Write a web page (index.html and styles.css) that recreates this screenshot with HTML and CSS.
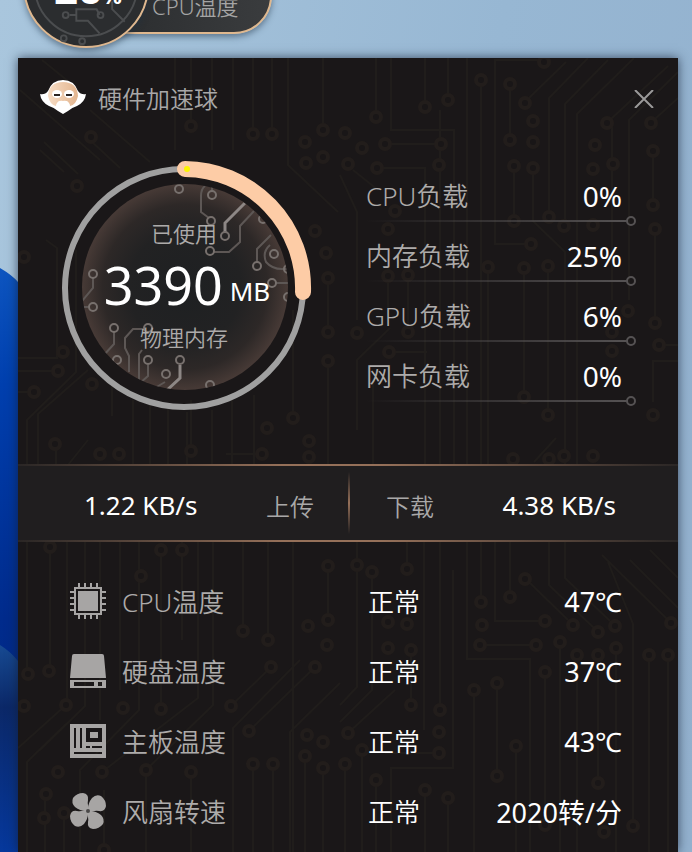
FILE: index.html
```html
<!DOCTYPE html>
<html lang="zh-CN">
<head>
    <meta charset="UTF-8">
    <meta name="viewport" content="width=device-width, initial-scale=1.0">
    <title>硬件加速球</title>
    <link rel="stylesheet" href="styles.css">
</head>
<body>

<!-- wallpaper -->
<svg class="wallpaper" width="60" height="852" viewBox="0 0 60 852" aria-hidden="true">
    <defs>
        <linearGradient id="petal" x1="0" y1="0" x2="0" y2="1">
            <stop offset="0" stop-color="#0d55c0"/>
            <stop offset="0.2" stop-color="#003fae"/>
            <stop offset="0.6" stop-color="#002b8c"/>
            <stop offset="1" stop-color="#00267c"/>
        </linearGradient>
        <linearGradient id="petal2" x1="0" y1="0" x2="0" y2="1">
            <stop offset="0" stop-color="#174a92"/>
            <stop offset="0.3" stop-color="#0b2868"/>
            <stop offset="1" stop-color="#06389c"/>
        </linearGradient>
    </defs>
    <path d="M0 268Q12 275 18 282L60 320V852H0Z" fill="url(#petal)"/>
    <path d="M0 645Q10 651 18 661L60 700V852H0Z" fill="url(#petal2)"/>
</svg>

<!-- floating ball -->
<div class="ball">
    <div class="ball-pill">CPU温度</div>
    <div class="ball-circle">
        <svg viewBox="0 0 126 126" width="122" height="122" aria-hidden="true">
            <g fill="none" stroke="#4b4d4f" stroke-width="2">
                <circle cx="63" cy="63" r="53"/>
                <path d="M46 94H53V88H74L77 94M53 94V100H65L77 113M90 80V88L103 101"/>
                <circle cx="42" cy="94" r="3"/>
                <circle cx="78" cy="94" r="3"/>
                <circle cx="40" cy="118" r="3"/>
                <circle cx="59" cy="121" r="3"/>
            </g>
        </svg>
        <span class="ball-num">26<small>%</small></span>
    </div>
</div>

<main class="panel">

    <svg class="circuit" viewBox="18 58 660 794" preserveAspectRatio="xMinYMin slice" aria-hidden="true">
        <path class="trace" d="M323 58V124M376 58V112M391 58V130H454V465M425 58V101M448 58V94M467 58V465M481 86V465M495 230V60H540M510 84V140M566 62L529 98M588 58L549 98V210M608 60L565 104V220M634 58L577 114V465M668 66L611 119M655 119L678 98M678 72L629 120V300M653 157V200M385 144H441"/>
        <path class="trace" d="M42 60L74 86M20 90L100 160M90 110L150 162M175 58V150M191 58V120M212 58V150M233 58V150M253 58V130M272 58V130M288 58V165L338 212M40 150L64 172M44 142L78 174M90 140L120 168M46 240L57 248V358H18M76 250V372L27 420V465M18 371H53M18 392H28M38 465V414L88 370M56 449V465M112 416V380M133 400V465M150 405V465M168 408V465M187 412V465M212 410V465M232 400V465M254 395V465M293 310V412M328 284V327M328 367V465"/>
        <path class="trace" d="M353 170L378 190M377 168H425V465M514 166V216M533 168V221L565 252V465M495 230V244H526M655 229V317M488 267V465M524 268V392M548 266V410M408 275V327M389 352H427M357 430V360L390 328M659 345H678M653 402V361H678M340 175L357 212V320M388 282V320M440 110V465M612 120V300M68 465L88 440M226 454H257M534 462L556 438M191 400V445M373 380V465"/>
        <path class="trace" d="M50 547V671M27 540V674M67 540V700M85 540V706L40 750M100 540V720M120 540V690M139 540V710L80 770V852M161 550V704M182 540V640M198 540V698L102 772M213 540V705L146 770M243 540V626M268 540V635M293 540V852M328 566V615M271 667L231 706M315 667L249 731M340 683L290 732V852M233 852V728L300 660M66 705L18 748M146 770V852M191 772V852M253 764V852M273 764V852M305 756V852M323 768V852M45 800V852M64 813V852M27 852V762L66 724M104 790V852"/>
        <path class="trace" d="M407 540V565M411 650V700M424 540V730M440 540V705M453 570V768H391V852M467 540V659H530V852M481 540V597M495 540V621H540M510 540V591M530 583L568 620M549 540V585L594 628M610 621L565 578V540M608 562L633 624V821M602 555L668 620M630 560L678 608M650 550L678 578M481 645H536M560 642V852M577 655V852M598 655V778M616 648V852M649 655V852M668 655V852M474 690V852M497 683V770M545 672V820M516 746V852M362 750V852M345 764V852M376 780V852M385 753H439M425 790V852M448 798V852M340 705L357 687V540M340 722L372 690V578M348 733L395 690"/>
        <defs>
            <path id="pads-top" d="M323 130h0M376 117h0M425 107h0M448 100h0M481 80h0M544 62h0M510 84h0M510 140h0M525 103h0M607 123h0M651 123h0M533 121h0M533 142h0M595 145h0M653 151h0M613 164h0M385 144h0M441 144h0M345 133h0M305 142h0M362 148h0M323 157h0M306 163h0M348 164h0M191 126h0M253 134h0M272 134h0M91 137h0M77 186h0M315 231h0M326 253h0M328 278h0M328 332h0M328 361h0M63 352h0M58 371h0M92 384h0M293 418h0M267 428h0"/>
            <path id="pads-mid" d="M24 257h0M34 392h0M377 168h0M439 165h0M514 166h0M533 168h0M593 169h0M395 211h0M388 229h0M549 217h0M564 226h0M593 225h0M531 244h0M514 221h0M653 205h0M655 229h0M655 323h0M488 267h0M524 268h0M548 266h0M524 397h0M388 276h0M408 275h0M408 332h0M357 333h0M389 352h0M628 311h0M612 332h0M612 351h0M659 345h0M548 415h0M653 415h0M55 444h0M100 454h0M119 454h0M191 451h0M262 454h0M309 441h0M309 457h0M513 459h0M549 459h0M564 456h0M593 456h0"/>
            <path id="pads-left" d="M50 547h0M28 674h0M161 550h0M182 550h0M49 671h0M24 706h0M141 576h0M161 709h0M123 708h0M243 631h0M268 640h0M308 626h0M328 566h0M328 620h0M327 645h0M271 667h0M231 706h0M315 667h0M249 731h0M66 705h0M58 772h0M102 772h0M146 770h0M191 772h0M253 764h0M273 764h0M305 756h0M323 768h0M307 735h0M323 742h0M46 794h0M64 813h0M44 818h0M104 850h0"/>
            <path id="pads-right" d="M357 565h0M372 572h0M407 569h0M388 622h0M407 624h0M388 648h0M411 650h0M411 705h0M440 710h0M481 602h0M545 621h0M482 625h0M510 597h0M525 579h0M573 625h0M598 632h0M615 626h0M671 623h0M480 645h0M536 645h0M560 642h0M577 655h0M598 655h0M598 783h0M616 648h0M649 655h0M668 655h0M474 690h0M497 683h0M497 776h0M545 672h0M545 825h0M516 746h0M348 733h0M362 750h0M345 764h0M376 780h0M439 732h0M439 753h0M425 790h0M448 798h0M633 826h0M604 832h0"/>
        </defs>
        <g class="pads">
            <use href="#pads-top"/><use href="#pads-mid"/><use href="#pads-left"/><use href="#pads-right"/>
        </g>
        <g class="holes">
            <use href="#pads-top"/><use href="#pads-mid"/><use href="#pads-left"/><use href="#pads-right"/>
        </g>
    </svg>

    <header class="head">
        <svg class="logo" width="46" height="34" viewBox="0 0 46 34" aria-hidden="true">
            <defs>
                <linearGradient id="skin" x1="0" x2="1">
                    <stop offset="0" stop-color="#f7ddc5"/>
                    <stop offset="1" stop-color="#e2b48e"/>
                </linearGradient>
            </defs>
            <path d="M0 14Q5 15 8 11Q12 0 23 0Q34 0 38 11Q41 15 46 14Q45 22 37 26Q31 28 28 31L23 34L18 31Q15 28 9 26Q1 22 0 14Z" fill="#fff"/>
            <path d="M8 16Q9 2 23 2Q37 2 38 16Q36 25 30 26L27 21H19L16 26Q10 25 8 16Z" fill="url(#skin)"/>
            <ellipse cx="17" cy="14" rx="5" ry="4" fill="#fff"/>
            <ellipse cx="29" cy="14" rx="5" ry="4" fill="#fff"/>
            <path d="M14 15H20M26 15H32" stroke="#2b2422" stroke-width="2"/>
            <path d="M23 21Q28 20 30 25Q28 31 23 33Q18 31 16 25Q18 20 23 21Z" fill="#fff"/>
        </svg>
        <h1>硬件加速球</h1>
        <button class="close" type="button" aria-label="关闭">
            <svg width="20" height="18" viewBox="0 0 20 18"><path d="M1 0L19 18M19 0L1 18" stroke="#9b9a9a" stroke-width="2" fill="none"/></svg>
        </button>
    </header>

    <section class="overview">
        <div class="gauge">
            <svg width="252" height="252" viewBox="0 0 252 252" aria-hidden="true">
                <defs>
                    <radialGradient id="disc">
                        <stop offset="0" stop-color="#1e2022"/>
                        <stop offset="0.55" stop-color="#222223"/>
                        <stop offset="0.8" stop-color="#2d2827"/>
                        <stop offset="1" stop-color="#473a36"/>
                    </radialGradient>
                    <clipPath id="disc-clip"><circle cx="127" cy="125" r="103"/></clipPath>
                </defs>
                <circle cx="127" cy="125" r="103" fill="url(#disc)"/>
                <g clip-path="url(#disc-clip)" fill="none" stroke="#5d5755" stroke-width="2">
                    <path d="M147 24Q143 27 143 34V50L151 56M154 21V30"/>
                    <path d="M167 71V61L187 41" stroke="#8d8785" stroke-width="3"/>
                    <path d="M156 90H171L182 80V64L196 49M199 100V87L213 73M212 83Q204 90 208 100Q214 107 224 107H229M218 121H230M35 116V126L24 139M26 145H31M56 170V182L45 194"/>
                    <path d="M71 210V194L67 186V176L75 167H86M81 220V192L84 188M90 203V214L82 221M107 220L97 226"/>
                    <path d="M122 203V216L108 229" stroke="#8d8785" stroke-width="3"/>
                    <g stroke="#77706d">
                        <circle cx="121" cy="27" r="4"/><circle cx="154" cy="33" r="4"/>
                        <circle cx="153" cy="59" r="4"/><circle cx="167" cy="74" r="4"/>
                        <circle cx="152" cy="89" r="4"/><circle cx="199" cy="104" r="4"/>
                        <circle cx="216" cy="92" r="4"/><circle cx="205" cy="57" r="4"/>
                        <circle cx="230" cy="107" r="4"/><circle cx="214" cy="121" r="4"/>
                        <circle cx="230" cy="135" r="4"/><circle cx="35" cy="112" r="4"/>
                        <circle cx="35" cy="145" r="4"/><circle cx="56" cy="166" r="4"/>
                        <circle cx="90" cy="166" r="4"/><circle cx="90" cy="198" r="4"/>
                        <circle cx="59" cy="198" r="4"/><circle cx="108" cy="212" r="4"/>
                        <circle cx="122" cy="198" r="4"/><circle cx="152" cy="223" r="4"/>
                    </g>
                </g>
                <circle cx="126" cy="126" r="119" fill="none" stroke="#a0a0a0" stroke-width="6"/>
                <path d="M127 7A119 119 0 0 1 245 130" fill="none" stroke="#fdcca6" stroke-width="16" stroke-linecap="round"/>
                <circle cx="129" cy="7" r="3" fill="#fdf500"/>
            </svg>
            <div class="gauge-text">
                <span class="gauge-label">已使用</span>
                <strong class="gauge-num">3390<small>MB</small></strong>
                <span class="gauge-label">物理内存</span>
            </div>
        </div>

        <ul class="loads">
            <li><span>CPU负载</span><b>0%</b></li>
            <li><span>内存负载</span><b>25%</b></li>
            <li><span>GPU负载</span><b>6%</b></li>
            <li><span>网卡负载</span><b>0%</b></li>
        </ul>
    </section>

    <section class="net">
        <div class="net-item up">
            <span class="speed">1.22 KB/s</span>
            <span class="net-label">上传</span>
        </div>
        <div class="net-item down">
            <span class="net-label">下载</span>
            <span class="speed">4.38 KB/s</span>
        </div>
    </section>

    <table class="temps">
        <tr>
            <td class="icon">
                <svg width="36" height="36" viewBox="0 0 36 36">
                    <rect x="5" y="5" width="26" height="26" fill="none" stroke="#a7a5a4" stroke-width="2"/>
                    <rect x="8" y="8" width="20" height="20" fill="#a7a5a4"/>
                    <path d="M9 0V4M15 0V4M21 0V4M27 0V4M9 32V36M15 32V36M21 32V36M27 32V36M0 9H4M0 15H4M0 21H4M0 27H4M32 9H36M32 15H36M32 21H36M32 27H36" stroke="#a7a5a4" stroke-width="2"/>
                </svg>
            </td>
            <th scope="row">CPU温度</th>
            <td>正常</td>
            <td class="value">47℃</td>
        </tr>
        <tr>
            <td class="icon">
                <svg width="36" height="36" viewBox="0 0 36 36">
                    <path d="M4 1H32Q34 1 34 3L36 25H0L2 3Q2 1 4 1Z" fill="#a7a5a4"/>
                    <path d="M0 27H36V35H0ZM4 29V33H24V29ZM28 29V33H32V29Z" fill="#a7a5a4" fill-rule="evenodd"/>
                </svg>
            </td>
            <th scope="row">硬盘温度</th>
            <td>正常</td>
            <td class="value">37℃</td>
        </tr>
        <tr>
            <td class="icon">
                <svg width="36" height="36" viewBox="0 0 36 36">
                    <path d="M0 1H36V35H0ZM4 5V25H6V5ZM10 5V25H12V5ZM16 5V19H32V5ZM20 9H28V15H20ZM16 23V25H20V23ZM22 23V25H32V23ZM4 29V31H32V29Z" fill="#a7a5a4" fill-rule="evenodd"/>
                </svg>
            </td>
            <th scope="row">主板温度</th>
            <td>正常</td>
            <td class="value">43℃</td>
        </tr>
        <tr>
            <td class="icon">
                <svg width="36" height="36" viewBox="0 0 36 36">
                    <g fill="#a7a5a4">
                        <path id="blade" d="M16 18Q10 18 5 14Q1 10 3 5Q7 0 13 0Q19 1 18 7Q17 12 20 17Z"/>
                        <use href="#blade" transform="rotate(90 18 18)"/>
                        <use href="#blade" transform="rotate(180 18 18)"/>
                        <use href="#blade" transform="rotate(270 18 18)"/>
                    </g>
                    <circle cx="18" cy="18" r="2" fill="#4a4848"/>
                </svg>
            </td>
            <th scope="row">风扇转速</th>
            <td>正常</td>
            <td class="value">2020转/分</td>
        </tr>
    </table>
</main>

</body>
</html>
```
FILE: styles.css
```css
*,*::before,*::after{
    box-sizing: border-box;
}
body{
    margin: 0;
    min-height: 100vh;
    padding: 58px 14px 0 18px;
    position: relative;
    overflow: hidden;
    display: flex;
    background: linear-gradient(100deg, #a9c6dd 0%, #97b7d3 60%, #93b1ce 100%);
    font-family: "Noto Sans", "Noto Sans CJK SC", sans-serif;
    color: #fff;
}
svg{
    display: block;
}
.wallpaper{
    position: absolute;
    left: 0;
    top: 0;
}

/* floating ball */
.ball-pill{
    position: absolute;
    left: 60px;
    top: -42px;
    width: 212px;
    height: 76px;
    padding: 34px 0 0 90px;
    border: 2px solid #dfb88f;
    border-radius: 38px;
    background: linear-gradient(to right, #26282a, #3a3c3e);
    box-shadow: 0 3px 6px rgba(30,50,70,.5);
    font-size: 22px;
    font-weight: 350;
    line-height: 24px;
    color: #a5a5a5;
}
.ball-circle{
    position: absolute;
    left: 23px;
    top: -78px;
    width: 126px;
    height: 126px;
    border: 2px solid #dfb88f;
    border-radius: 50%;
    background: #2b2d2f;
    box-shadow: 0 3px 6px rgba(30,50,70,.5);
}
.ball-num{
    position: absolute;
    left: 29px;
    top: 40px;
    font-size: 42px;
    font-weight: 700;
    line-height: 48px;
}
.ball-num small{
    font-size: 22px;
}

/* panel */
.panel{
    position: relative;
    flex: 1;
    background: #1a1718;
    box-shadow: 0 0 10px rgba(20,30,50,.7);
}
.circuit{
    position: absolute;
    left: 0;
    top: 0;
    width: 100%;
    height: 100%;
}
.trace{
    fill: none;
    stroke: #201d1b;
    stroke-width: 2;
}
.pads,.holes{
    stroke-linecap: round;
}
.pads{
    stroke: #221d1b;
    stroke-width: 14;
}
.holes{
    stroke: #191617;
    stroke-width: 6;
}
.head,.overview,.net,.temps{
    position: relative;
}
.head{
    display: flex;
    align-items: center;
    height: 82px;
    padding: 0 24px 4px 22px;
}
.head h1{
    margin: 0 auto 0 12px;
    font-size: 24px;
    font-weight: 350;
    color: #a9a8a8;
}
.close{
    margin-top: 4px;
    padding: 0;
    border: 0;
    background: none;
    cursor: pointer;
}

/* gauge and loads */
.overview{
    display: flex;
    justify-content: space-between;
    height: 324px;
    padding: 22px 42px 0 40px;
}
.gauge{
    position: relative;
}
.gauge svg{
    overflow: visible;
}
.gauge-text{
    position: absolute;
    left: 0;
    top: 59px;
    width: 100%;
    display: flex;
    flex-direction: column;
    align-items: center;
}
.gauge-label{
    font-size: 22px;
    font-weight: 350;
    line-height: 24px;
    color: #adabaa;
}
.gauge-num{
    padding-left: 6px;
    font-size: 52px;
    font-weight: 400;
    line-height: 80px;
}
.gauge-num small{
    margin-left: 7px;
    font-size: 26px;
    line-height: 1;
    vertical-align: 4px;
}
.loads{
    width: 270px;
    margin: 0;
    padding: 0;
    list-style: none;
}
.loads li{
    position: relative;
    display: flex;
    justify-content: space-between;
    height: 60px;
    padding: 10px 14px 0 0;
    font-size: 26px;
    line-height: 48px;
}
.loads li::before{
    content: "";
    position: absolute;
    left: 0;
    right: 9px;
    bottom: 0;
    height: 2px;
    background: linear-gradient(to right, transparent, #555253);
}
.loads li::after{
    content: "";
    position: absolute;
    right: 0;
    bottom: -4px;
    width: 10px;
    height: 10px;
    border: 2px solid #555253;
    border-radius: 50%;
}
.loads span{
    font-weight: 350;
    color: #adabaa;
}
.loads b{
    font-size: 28px;
    font-weight: 400;
}

/* network */
.net{
    display: flex;
    height: 78px;
    background: #201e1f;
}
.net::before,.net::after{
    content: "";
    position: absolute;
    left: 0;
    right: 0;
    height: 2px;
    background: linear-gradient(to right, #2a2625, #957059 40%, #957059 55%, #2a2625);
}
.net::before{
    top: 0;
}
.net::after{
    bottom: 0;
}
.net-item{
    flex: 1;
    display: flex;
    justify-content: space-between;
    align-items: center;
}
.up{
    padding: 4px 36px 0 66px;
    background: linear-gradient(to bottom, transparent, #957059, transparent) right center / 2px 62px no-repeat;
}
.down{
    padding: 4px 62px 0 36px;
}
.speed{
    font-size: 26px;
}
.net-label{
    font-size: 24px;
    font-weight: 350;
    color: #a9a8a8;
}

/* temperatures */
.temps{
    width: calc(100% - 108px);
    margin: 24px 56px 0 52px;
    border-collapse: collapse;
    table-layout: fixed;
    font-size: 26px;
}
.temps td,.temps th{
    height: 70px;
    padding: 0;
    font-weight: 350;
    text-align: left;
    white-space: nowrap;
}
.temps th{
    width: 246px;
    color: #adabaa;
}
.temps .icon{
    width: 52px;
}
.temps .value{
    width: 154px;
    font-size: 27px;
    font-weight: 400;
    text-align: right;
}
```
